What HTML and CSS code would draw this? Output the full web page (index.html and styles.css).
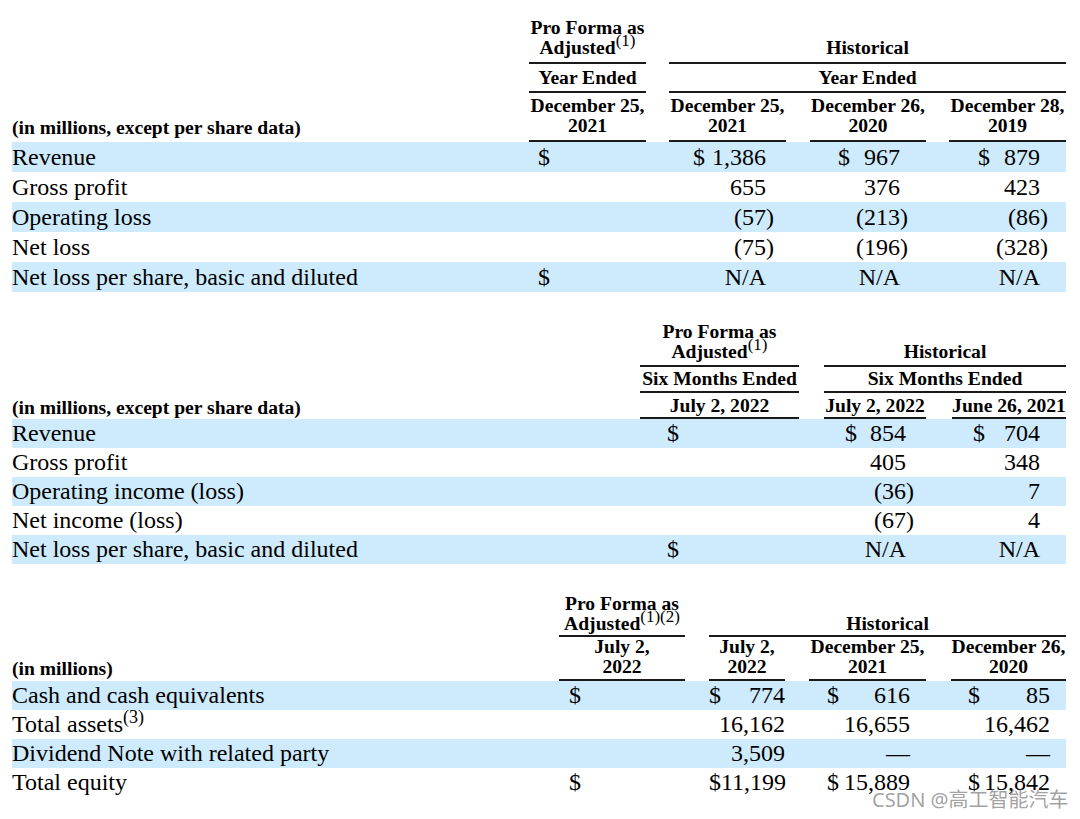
FILE: index.html
```html
<!DOCTYPE html>
<html lang="en">
<head>
<meta charset="utf-8">
<title>Summary financial data</title>
<link rel="stylesheet" href="styles.css">
</head>
<body>
<div class="page">

  <section class="tbl t1">
    <div class="row hr1">
      <div class="hc k1 rule"><span>Pro Forma as</span><span>Adjusted<sup>(1)</sup></span></div>
      <div class="hc span rule"><span>Historical</span></div>
    </div>
    <div class="row hr2">
      <div class="hc k1 rule"><span>Year Ended</span></div>
      <div class="hc span rule"><span>Year Ended</span></div>
    </div>
    <div class="row hr3">
      <div class="hc lab"><span>(in millions, except per share data)</span></div>
      <div class="hc k1 rule"><span>December 25,</span><span>2021</span></div>
      <div class="hc k2 rule"><span>December 25,</span><span>2021</span></div>
      <div class="hc k3 rule"><span>December 26,</span><span>2020</span></div>
      <div class="hc k4 rule"><span>December 28,</span><span>2019</span></div>
    </div>
    <div class="row dr blue">
      <div class="lc">Revenue</div>
      <div class="v k1"><span>$</span></div>
      <div class="v k2"><span>$</span><span class="n">1,386</span><span class="rp"></span></div>
      <div class="v k3"><span>$</span><span class="n">967</span><span class="rp"></span></div>
      <div class="v k4"><span>$</span><span class="n">879</span><span class="rp"></span></div>
    </div>
    <div class="row dr">
      <div class="lc">Gross profit</div>
      <div class="v k2"><span class="n">655</span><span class="rp"></span></div>
      <div class="v k3"><span class="n">376</span><span class="rp"></span></div>
      <div class="v k4"><span class="n">423</span><span class="rp"></span></div>
    </div>
    <div class="row dr blue">
      <div class="lc">Operating loss</div>
      <div class="v k2"><span class="n">(57</span><span class="rp">)</span></div>
      <div class="v k3"><span class="n">(213</span><span class="rp">)</span></div>
      <div class="v k4"><span class="n">(86</span><span class="rp">)</span></div>
    </div>
    <div class="row dr">
      <div class="lc">Net loss</div>
      <div class="v k2"><span class="n">(75</span><span class="rp">)</span></div>
      <div class="v k3"><span class="n">(196</span><span class="rp">)</span></div>
      <div class="v k4"><span class="n">(328</span><span class="rp">)</span></div>
    </div>
    <div class="row dr blue">
      <div class="lc">Net loss per share, basic and diluted</div>
      <div class="v k1"><span>$</span></div>
      <div class="v k2"><span class="n">N/A</span><span class="rp"></span></div>
      <div class="v k3"><span class="n">N/A</span><span class="rp"></span></div>
      <div class="v k4"><span class="n">N/A</span><span class="rp"></span></div>
    </div>
  </section>

  <section class="tbl t2">
    <div class="row hr1">
      <div class="hc k1 rule"><span>Pro Forma as</span><span>Adjusted<sup>(1)</sup></span></div>
      <div class="hc span rule"><span>Historical</span></div>
    </div>
    <div class="row hr2">
      <div class="hc k1 rule"><span>Six Months Ended</span></div>
      <div class="hc span rule"><span>Six Months Ended</span></div>
    </div>
    <div class="row hr3">
      <div class="hc lab"><span>(in millions, except per share data)</span></div>
      <div class="hc k1 rule"><span>July 2, 2022</span></div>
      <div class="hc k2 rule"><span>July 2, 2022</span></div>
      <div class="hc k3 rule"><span>June 26, 2021</span></div>
    </div>
    <div class="row dr blue">
      <div class="lc">Revenue</div>
      <div class="v k1"><span>$</span></div>
      <div class="v k2"><span>$</span><span class="n">854</span><span class="rp"></span></div>
      <div class="v k3"><span>$</span><span class="n">704</span><span class="rp"></span></div>
    </div>
    <div class="row dr">
      <div class="lc">Gross profit</div>
      <div class="v k2"><span class="n">405</span><span class="rp"></span></div>
      <div class="v k3"><span class="n">348</span><span class="rp"></span></div>
    </div>
    <div class="row dr blue">
      <div class="lc">Operating income (loss)</div>
      <div class="v k2"><span class="n">(36</span><span class="rp">)</span></div>
      <div class="v k3"><span class="n">7</span><span class="rp"></span></div>
    </div>
    <div class="row dr">
      <div class="lc">Net income (loss)</div>
      <div class="v k2"><span class="n">(67</span><span class="rp">)</span></div>
      <div class="v k3"><span class="n">4</span><span class="rp"></span></div>
    </div>
    <div class="row dr blue">
      <div class="lc">Net loss per share, basic and diluted</div>
      <div class="v k1"><span>$</span></div>
      <div class="v k2"><span class="n">N/A</span><span class="rp"></span></div>
      <div class="v k3"><span class="n">N/A</span><span class="rp"></span></div>
    </div>
  </section>

  <section class="tbl t3">
    <div class="row hr1">
      <div class="hc k1 rule"><span>Pro Forma as</span><span>Adjusted<sup>(1)(2)</sup></span></div>
      <div class="hc span rule"><span>Historical</span></div>
    </div>
    <div class="row hr2">
      <div class="hc lab"><span>(in millions)</span></div>
      <div class="hc k1 rule"><span>July 2,</span><span>2022</span></div>
      <div class="hc k2 rule"><span>July 2,</span><span>2022</span></div>
      <div class="hc k3 rule"><span>December 25,</span><span>2021</span></div>
      <div class="hc k4 rule"><span>December 26,</span><span>2020</span></div>
    </div>
    <div class="row dr blue">
      <div class="lc">Cash and cash equivalents</div>
      <div class="v k1"><span>$</span></div>
      <div class="v k2"><span>$</span><span class="n">774</span></div>
      <div class="v k3"><span>$</span><span class="n">616</span></div>
      <div class="v k4"><span>$</span><span class="n">85</span></div>
    </div>
    <div class="row dr">
      <div class="lc">Total assets<sup class="fn">(3)</sup></div>
      <div class="v k2"><span class="n">16,162</span></div>
      <div class="v k3"><span class="n">16,655</span></div>
      <div class="v k4"><span class="n">16,462</span></div>
    </div>
    <div class="row dr blue">
      <div class="lc">Dividend Note with related party</div>
      <div class="v k2"><span class="n">3,509</span></div>
      <div class="v k3"><span class="n">—</span></div>
      <div class="v k4"><span class="n">—</span></div>
    </div>
    <div class="row dr">
      <div class="lc">Total equity</div>
      <div class="v k1"><span>$</span></div>
      <div class="v k2"><span>$</span><span class="n">11,199</span></div>
      <div class="v k3"><span>$</span><span class="n">15,889</span></div>
      <div class="v k4"><span>$</span><span class="n">15,842</span></div>
    </div>
  </section>

  <div class="wm">CSDN @高工智能汽车</div>
</div>
</body>
</html>
```

FILE: styles.css
```css
* { box-sizing: border-box; }

html, body {
  margin: 0;
  background: #ffffff;
}

body {
  color: #000;
  font-family: "Liberation Serif", "Times New Roman", serif;
}

.page {
  position: relative;
  width: 1080px;
  height: 819px;
  padding: 18px 0 0 12px;
  overflow: hidden;
}

.tbl { width: 1054px; }
.tbl + .tbl { margin-top: 30px; }

.t1 { --cols: 517px 117px 23px 117px 24px 116px 23px 117px; }
.t2 { --cols: 628px 159px 25px 102px 26px 114px; }
.t3 { --cols: 547px 126px 24px 76px 24px 117px 25px 115px; }

.row {
  display: grid;
  grid-template-columns: var(--cols);
}

.k1 { grid-column: 2; }
.k2 { grid-column: 4; }
.k3 { grid-column: 6; }
.k4 { grid-column: 8; }
.span { grid-column: 4 / -1; }
.lab, .lc { grid-column: 1; }

/* header cells */
.hc {
  display: flex;
  flex-direction: column;
  justify-content: flex-end;
  text-align: center;
  font-weight: bold;
  font-size: 19.6px;
  line-height: 20px;
  white-space: nowrap;
}
.hc.lab { text-align: left; }
.rule { border-bottom: 2px solid #1a1a1a; }

sup {
  font-size: 17px;
  font-weight: normal;
  line-height: 0;
  vertical-align: 8px;
}
sup.fn {
  font-size: 18px;
  vertical-align: 9px;
}

.t1 .hr1 .hc { padding-bottom: 4px; }
.t1 .hr2 { padding-top: 4px; }
.t1 .hr2 .hc { padding-bottom: 3px; }
.t1 .hr3 { padding-top: 3px; }
.t1 .hr3 .hc { padding-bottom: 4px; }

.t2 .hr1 .hc { padding-bottom: 3px; }
.t2 .hr2 { padding-top: 2px; }
.t2 .hr2 .hc { padding-bottom: 2px; }
.t2 .hr3 { padding-top: 3px; }
.t2 .hr3 .hc { padding-bottom: 1px; }

.t3 .hr1 .hc { padding-bottom: 1px; }
.t3 .hr2 .hc { padding-bottom: 2px; }

/* data rows */
.dr {
  height: 30px;
  font-size: 24px;
  line-height: 30px;
  white-space: nowrap;
}
.t2 .dr, .t3 .dr { height: 29px; line-height: 29px; }
.blue { background: #cdebfc; }

.v { display: flex; }
.v .n { margin-left: auto; }
.v .rp { width: 8px; }

.t1 .k1 { padding-left: 9px; }
.t1 .k2 { padding: 0 12px 0 24px; }
.t1 .k3 { padding: 0 18px 0 28px; }
.t1 .k4 { padding: 0 18px 0 29px; }

.t2 .k1 { padding-left: 27px; }
.t2 .k2 { padding: 0 12px 0 21px; }
.t2 .k3 { padding: 0 18px 0 21px; }

.t3 .k1 { padding-left: 10px; }
.t3 .k2 { padding: 0; }
.t3 .k3 { padding: 0 16px 0 18px; }
.t3 .k4 { padding: 0 16px 0 17px; }

.t1 .hc, .t2 .hc, .t3 .hc { padding-left: 0; padding-right: 0; }

.wm {
  position: absolute;
  left: 872px;
  top: 788px;
  font-family: "Noto Sans", "Noto Sans CJK SC", sans-serif;
  font-size: 20px;
  line-height: 24px;
  color: rgba(120, 120, 120, 0.7);
  white-space: nowrap;
}
```
